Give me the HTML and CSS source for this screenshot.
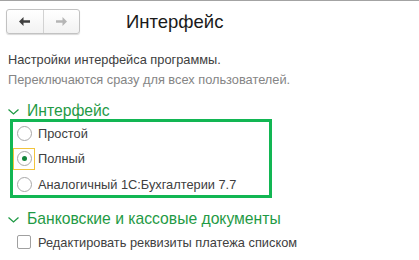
FILE: index.html
```html
<!DOCTYPE html>
<html lang="ru">
<head>
  <meta charset="UTF-8" />
  <title>Интерфейс</title>
  <link rel="stylesheet" href="styles.css">
</head>
<body>
  <div class="form">
    <header class="form-head">
      <div class="nav-buttons">
        <button class="nav-btn">
          <svg width="11" height="9" viewBox="0 0 11 9"><path d="M0 4.5 L4.5 0 V3.2 H11 V5.8 H4.5 V9 Z" fill="#3f3f3f"/></svg>
        </button>
        <button class="nav-btn">
          <svg width="11" height="9" viewBox="0 0 11 9"><path d="M11 4.5 L6.5 0 V3.2 H0 V5.8 H6.5 V9 Z" fill="#b5b5b5"/></svg>
        </button>
      </div>
      <h1 class="form-title">Интерфейс</h1>
    </header>

    <div class="intro">
      <p>Настройки интерфейса программы.</p>
      <p class="note">Переключаются сразу для всех пользователей.</p>
    </div>

    <div class="section-title">
      <svg class="chevron" width="11" height="6" viewBox="0 0 11 6"><path d="M0.5 0.5 L5.5 5 L10.5 0.5" fill="none" stroke="#1f9a45" stroke-width="1.3"/></svg>
      Интерфейс
    </div>
    <div class="choice-group">
      <label class="row"><span class="mark"><span class="radio"></span></span>Простой</label>
      <label class="row"><span class="mark focused"><span class="radio checked"></span></span>Полный</label>
      <label class="row"><span class="mark"><span class="radio"></span></span>Аналогичный 1С:Бухгалтерии 7.7</label>
    </div>

    <div class="section-title second">
      <svg class="chevron" width="11" height="6" viewBox="0 0 11 6"><path d="M0.5 0.5 L5.5 5 L10.5 0.5" fill="none" stroke="#1f9a45" stroke-width="1.3"/></svg>
      Банковские и кассовые документы
    </div>
    <label class="row check-row"><span class="mark"><span class="checkbox"></span></span>Редактировать реквизиты платежа списком</label>
  </div>
</body>
</html>
```

FILE: styles.css
```css
* {
  margin: 0;
  padding: 0;
  box-sizing: border-box;
}

html, body {
  background: white;
  font-family: "Liberation Sans", Arial, sans-serif;
  color: #404040;
}

.form {
  border-top: 1px solid #a3a3a3;
  height: 260px;
}

.form-head {
  display: flex;
  align-items: center;
  padding: 8px 6px 0;
}

.nav-buttons {
  display: flex;
  width: 74px;
  height: 25px;
  border: 1px solid #c2c2c2;
  border-radius: 3px;
  background: linear-gradient(#ffffff, #f2f2f2);
  box-shadow: 0 1px 1px rgba(0, 0, 0, 0.15);
}

.nav-btn {
  flex: 1;
  display: flex;
  align-items: center;
  justify-content: center;
  border: none;
  background: none;
}

.nav-btn + .nav-btn {
  border-left: 1px solid #d2d2d2;
}

.form-title {
  margin-left: 46px;
  font-size: 18.5px;
  font-weight: normal;
  color: #1a1a1a;
  line-height: 22px;
}

.intro {
  margin: 16px 0 0 8px;
  font-size: 12.8px;
  line-height: 20px;
}

.intro .note {
  color: #858585;
}

.section-title {
  display: flex;
  align-items: center;
  margin: 12px 0 0 8px;
  font-size: 15.7px;
  line-height: 17px;
  color: #1f9a45;
}

.section-title.second {
  margin-top: 12px;
}

.chevron {
  margin: 2px 8px 0 0;
}

.choice-group {
  display: flex;
  flex-direction: column;
  gap: 3.5px;
  width: 262px;
  margin-left: 10px;
  border: 3px solid #12b653;
}

.row {
  display: flex;
  align-items: center;
  height: 22px;
  font-size: 12.8px;
  color: #404040;
}

.mark {
  width: 22px;
  height: 22px;
  margin-right: 3px;
  display: flex;
  align-items: center;
  justify-content: center;
  border: 1px solid transparent;
}

.mark.focused {
  border-color: #f2c43c;
}

.radio {
  width: 15px;
  height: 15px;
  border: 1px solid #a8a8a8;
  border-radius: 50%;
  background: white;
  display: flex;
  align-items: center;
  justify-content: center;
}

.radio.checked::after {
  content: "";
  width: 5px;
  height: 5px;
  border-radius: 50%;
  background: #13853b;
}

.check-row {
  margin: 4px 0 0 13px;
}

.checkbox {
  width: 14px;
  height: 14px;
  border: 1px solid #a0a0a0;
  border-radius: 2px;
  background: white;
}
```
